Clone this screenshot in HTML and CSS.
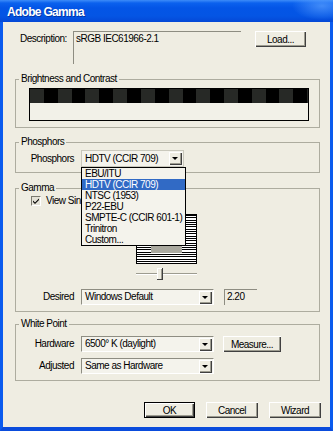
FILE: index.html
```html
<!DOCTYPE html>
<html>
<head>
<meta charset="utf-8">
<link rel="stylesheet" href="styles.css">
</head>
<body>
<div class="window">
  <div class="titlebar"><span class="title">Adobe Gamma</span></div>
  <div class="frame">
    <div class="desc-row">
      <span class="desc-label">Description:</span>
      <div class="desc-box">sRGB IEC61966-2.1</div>
      <button class="btn load">Load...</button>
    </div>

    <fieldset class="group g-bc">
      <legend>Brightness and Contrast</legend>
      <div class="gbody bc-body">
        <div class="bc-bar"><div class="bc-top"></div><div class="bc-bottom"></div></div>
      </div>
    </fieldset>

    <fieldset class="group g-ph">
      <legend>Phosphors</legend>
      <div class="gbody ph-body">
        <div class="frow">
          <span class="lbl">Phosphors</span>
          <div class="combo combo-ph"><span class="ctext">HDTV (CCIR 709)</span><span class="dbtn"><span class="arrow"></span></span>
            <ul class="list">
              <li>EBU/ITU</li>
              <li class="sel">HDTV (CCIR 709)</li>
              <li>NTSC (1953)</li>
              <li>P22-EBU</li>
              <li>SMPTE-C (CCIR 601-1)</li>
              <li>Trinitron</li>
              <li>Custom...</li>
            </ul>
          </div>
        </div>
      </div>
    </fieldset>

    <fieldset class="group g-gm">
      <legend>Gamma</legend>
      <div class="gbody gm-body">
        <div class="chk-row">
          <span class="chk"><svg width="8" height="8" viewBox="0 0 8 8"><path d="M1 3.5 L3 5.5 L7 1.5 L7 3 L3 7 L1 5 Z" fill="#000"/></svg></span>
          <span class="chk-text">View Single Gamma Only</span>
        </div>
        <div class="gimg"><div class="gcenter"></div></div>
        <div class="slider">
          <svg width="61" height="12" viewBox="0 0 61 12">
            <rect x="0" y="5" width="61" height="1" fill="#9d9c90"/>
            <rect x="0" y="6" width="61" height="1" fill="#ffffff"/>
            <rect x="21" y="0" width="6" height="12" fill="#efede2"/>
            <rect x="21" y="0" width="5" height="1" fill="#ffffff"/>
            <rect x="21" y="0" width="1" height="11" fill="#ffffff"/>
            <rect x="26" y="0" width="1" height="12" fill="#404040"/>
            <rect x="21" y="11" width="6" height="1" fill="#404040"/>
            <rect x="25" y="1" width="1" height="10" fill="#9d9c90"/>
          </svg>
        </div>
        <div class="frow">
          <span class="lbl">Desired</span>
          <div class="combo"><span class="ctext">Windows Default</span><span class="dbtn"><span class="arrow"></span></span></div>
          <div class="valbox">2.20</div>
        </div>
      </div>
    </fieldset>

    <fieldset class="group g-wp">
      <legend>White Point</legend>
      <div class="gbody wp-body">
        <div class="frow">
          <span class="lbl">Hardware</span>
          <div class="combo"><span class="ctext">6500° K (daylight)</span><span class="dbtn"><span class="arrow"></span></span></div>
          <button class="btn measure">Measure...</button>
        </div>
        <div class="frow row2">
          <span class="lbl">Adjusted</span>
          <div class="combo"><span class="ctext">Same as Hardware</span><span class="dbtn"><span class="arrow"></span></span></div>
        </div>
      </div>
    </fieldset>

    <div class="buttons">
      <button class="btn ok">OK</button>
      <button class="btn">Cancel</button>
      <button class="btn">Wizard</button>
    </div>
  </div>
</div>
</body>
</html>
```

FILE: styles.css
```css
* { box-sizing: border-box; }
html, body { margin: 0; padding: 0; background: #0a50e0; }
body {
  font-family: "Liberation Sans", Arial, sans-serif;
  font-size: 10px;
  letter-spacing: -0.5px;
  color: #000;
}
.window {
  width: 333px;
  height: 431px;
  display: flex;
  flex-direction: column;
  overflow: hidden;
}
.titlebar {
  height: 22px;
  flex: none;
  display: flex;
  align-items: center;
  padding-left: 7px;
  background:
    radial-gradient(ellipse 30px 14px at 322px 6px, rgba(90,160,255,0.7), rgba(90,160,255,0) 100%),
    linear-gradient(#3d8cf8 0px, #0b61ee 3px, #0355e6 8px, #0455e4 16px, #0448d6 22px);
}
.title {
  color: #fff;
  font-weight: bold;
  font-size: 12px;
  letter-spacing: -0.7px;
  text-shadow: 1px 1px 0 rgba(0,20,100,0.5);
  margin-top: 1px;
}
.frame {
  flex: 1;
  background: #efede2;
  border-left: 3px solid #0b5bee;
  border-right: 3px solid #0b5bee;
  border-bottom: 4px solid #0a4cdc;
  padding: 9px 10px 0 12px;
  display: flex;
  flex-direction: column;
}
.desc-row {
  display: flex;
  align-items: flex-start;
  padding-left: 5px;
  margin-bottom: 9px;
}
.desc-label {
  width: 53px;
  line-height: 13px;
  padding-top: 1px;
}
.desc-box {
  width: 168px;
  height: 33px;
  border-top: 1px solid #8e8d82;
  border-left: 1px solid #8e8d82;
  padding: 1px 0 0 2px;
  line-height: 12px;
}
.btn {
  font-family: inherit;
  font-size: 10px;
  letter-spacing: -0.5px;
  color: #000;
  background: #efede2;
  width: 52px;
  height: 16px;
  padding: 0;
  margin: 0;
  border: none;
  box-shadow: inset 1px 1px #ffffff, inset -1px -1px #404040, inset -2px -2px #9d9c90;
  line-height: 15px;
  text-align: center;
}
.load { margin-left: 14px; width: 51px; }
.group {
  margin: 0;
  padding: 0;
  border: 1px solid #adac9f;
  min-width: 0;
}
.group legend {
  padding: 0 2px;
  margin-left: 3px;
  line-height: 12px;
  font-size: 10px;
}
.g-ph { margin-top: 8px; }
.g-gm { margin-top: 9px; }
.g-wp { margin-top: 6px; }
.bc-body { padding: 3px 0 6px 13px; }
.bc-bar {
  width: 280px;
  height: 33px;
  border: 1px solid #000;
  display: flex;
  flex-direction: column;
}
.bc-top {
  height: 14px;
  background: repeating-linear-gradient(to right, #272926 0 14px, #000 14px 27.7px);
}
.bc-bottom {
  flex: 1;
  background: #f2f1e8;
}
.ph-body { padding: 2px 0 5px 0; }
.frow {
  display: flex;
  align-items: center;
}
.lbl {
  width: 58px;
  text-align: right;
  margin-right: 7px;
  line-height: 12px;
}
.combo {
  position: relative;
  width: 133px;
  height: 16px;
  border-top: 1px solid #8e8d82;
  border-left: 1px solid #8e8d82;
  border-bottom: 1px solid #ffffff;
  border-right: 1px solid #ffffff;
  background: #f4f3ec;
  display: flex;
  align-items: center;
  padding-left: 3px;
}
.combo-ph {
  width: 103px;
  height: 17px;
  outline: 1px solid #c9c8bc;
  outline-offset: -1px;
  border-top: 1px solid #7a796f;
  border-left: 1px solid #7a796f;
}
.ctext { flex: 1; line-height: 12px; white-space: nowrap; }
.dbtn {
  width: 13px;
  height: 13px;
  margin-right: 1px;
  background: #efede2;
  box-shadow: inset 1px 1px #ffffff, inset -1px -1px #404040, inset -2px -2px #9d9c90;
  display: flex;
  align-items: center;
  justify-content: center;
}
.arrow {
  width: 0;
  height: 0;
  border-left: 3px solid transparent;
  border-right: 3px solid transparent;
  border-top: 3px solid #000;
  margin-left: -1px;
}
.list {
  position: absolute;
  z-index: 10;
  left: -1px;
  top: 16px;
  width: 105px;
  margin: 0;
  padding: 0;
  list-style: none;
  background: #f4f3ec;
  border: 1px solid #000;
}
.list li {
  height: 11px;
  line-height: 11px;
  padding-left: 3px;
  white-space: nowrap;
}
.list li.sel {
  background: #316ac5;
  color: #fff;
}
.gm-body { padding: 2px 0 6px 0; }
.chk-row {
  display: flex;
  align-items: center;
  padding-left: 15px;
  height: 10px;
}
.chk {
  width: 10px;
  height: 10px;
  border-top: 1px solid #7a796f;
  border-left: 1px solid #7a796f;
  border-bottom: 1px solid #ffffff;
  border-right: 1px solid #ffffff;
  background: #e4e2d7;
  display: flex;
  align-items: center;
  justify-content: center;
  margin-right: 5px;
}
.chk svg { display: block; }
.chk-text { line-height: 12px; white-space: nowrap; }
.gimg {
  margin: 8px 0 0 120px;
  width: 61px;
  height: 50px;
  border: 1px solid #000;
  background: repeating-linear-gradient(to bottom, #000 0 1px, #fff 1px 2.3px);
  display: flex;
  align-items: flex-end;
  justify-content: center;
  padding-bottom: 10px;
}
.gcenter {
  width: 31px;
  height: 31px;
  background: #a9a89e;
}
.slider {
  margin: 4px 0 0 120px;
  height: 12px;
}
.slider svg { display: block; }
.gm-body .frow { margin-top: 9px; }
.valbox {
  margin-left: 10px;
  width: 33px;
  height: 16px;
  border-top: 1px solid #8e8d82;
  border-left: 1px solid #8e8d82;
  padding-left: 2px;
  line-height: 14px;
}
.wp-body { padding: 6px 0 6px 0; }
.row2 { margin-top: 6px; }
.measure { margin-left: 9px; width: 58px; }
.buttons {
  display: flex;
  justify-content: flex-end;
  gap: 11px;
  margin-top: 21px;
  margin-right: -1px;
}
.buttons .btn { width: 52px; }
.buttons .ok {
  width: 51px;
  box-shadow: inset 0 0 0 1px #000, inset 2px 2px #ffffff, inset -2px -2px #404040, inset -3px -3px #9d9c90;
}
```
